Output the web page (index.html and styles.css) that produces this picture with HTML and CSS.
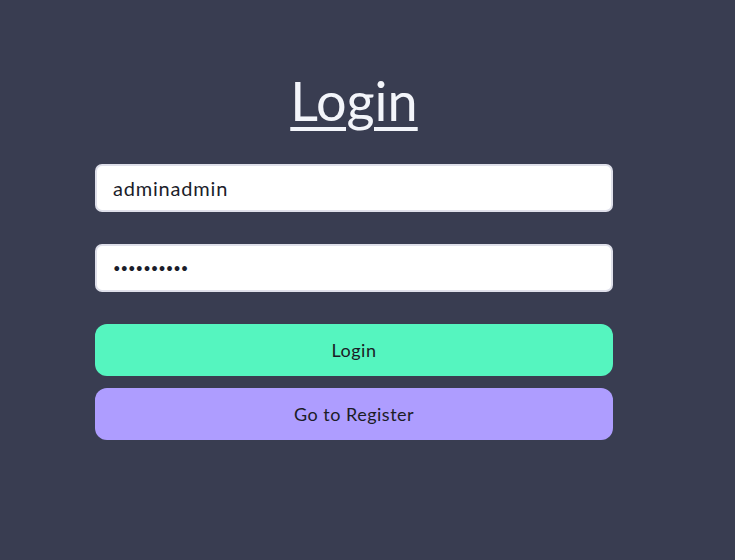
FILE: index.html
```html
<!DOCTYPE html>
<html lang="en">
<head>
<meta charset="utf-8">
<title>Login</title>
<link rel="stylesheet" href="styles.css">
</head>
<body>
<main class="page">
  <form class="login-form">
    <h1 class="title">Login</h1>
    <input class="field" type="text" value="adminadmin">
    <input class="field field-password" type="password" value="adminadmi1">
    <button class="btn btn-login" type="button">Login</button>
    <button class="btn btn-register" type="button">Go to Register</button>
  </form>
</main>
</body>
</html>
```

FILE: styles.css
```css
html, body {
  margin: 0;
  padding: 0;
  background: #393d51;
  height: 100%;
}

body {
  font-family: "Lato", "Open Sans", sans-serif;
}

.page {
  padding-top: 72px;
  padding-left: 95px;
}

.login-form {
  width: 518px;
  display: flex;
  flex-direction: column;
}

.title {
  margin: 0 0 34px 0;
  text-align: center;
  font-weight: 400;
  font-size: 54px;
  line-height: 58px;
  color: #f3f5fa;
  text-decoration: underline;
  text-decoration-thickness: 4px;
  text-underline-offset: 6px;
}

.field {
  box-sizing: border-box;
  height: 48px;
  margin: 0 0 32px 0;
  padding: 0 16px;
  border: 2px solid #dfe0ea;
  border-radius: 7px;
  background: #ffffff;
  font-family: "Lato", "Open Sans", sans-serif;
  font-size: 20px;
  letter-spacing: 0.8px;
  color: #1b1d2a;
  outline: none;
}

.field-password {
  font-size: 13px;
  letter-spacing: 0;
}

.btn {
  box-sizing: border-box;
  height: 52px;
  border: none;
  border-radius: 12px;
  font-family: "Lato", "Open Sans", sans-serif;
  font-size: 18px;
  letter-spacing: 0.5px;
  color: #1b1c26;
  cursor: pointer;
}

.btn-login {
  background: #55f5bf;
  margin-bottom: 12px;
}

.btn-register {
  background: #ae9dff;
}
```
